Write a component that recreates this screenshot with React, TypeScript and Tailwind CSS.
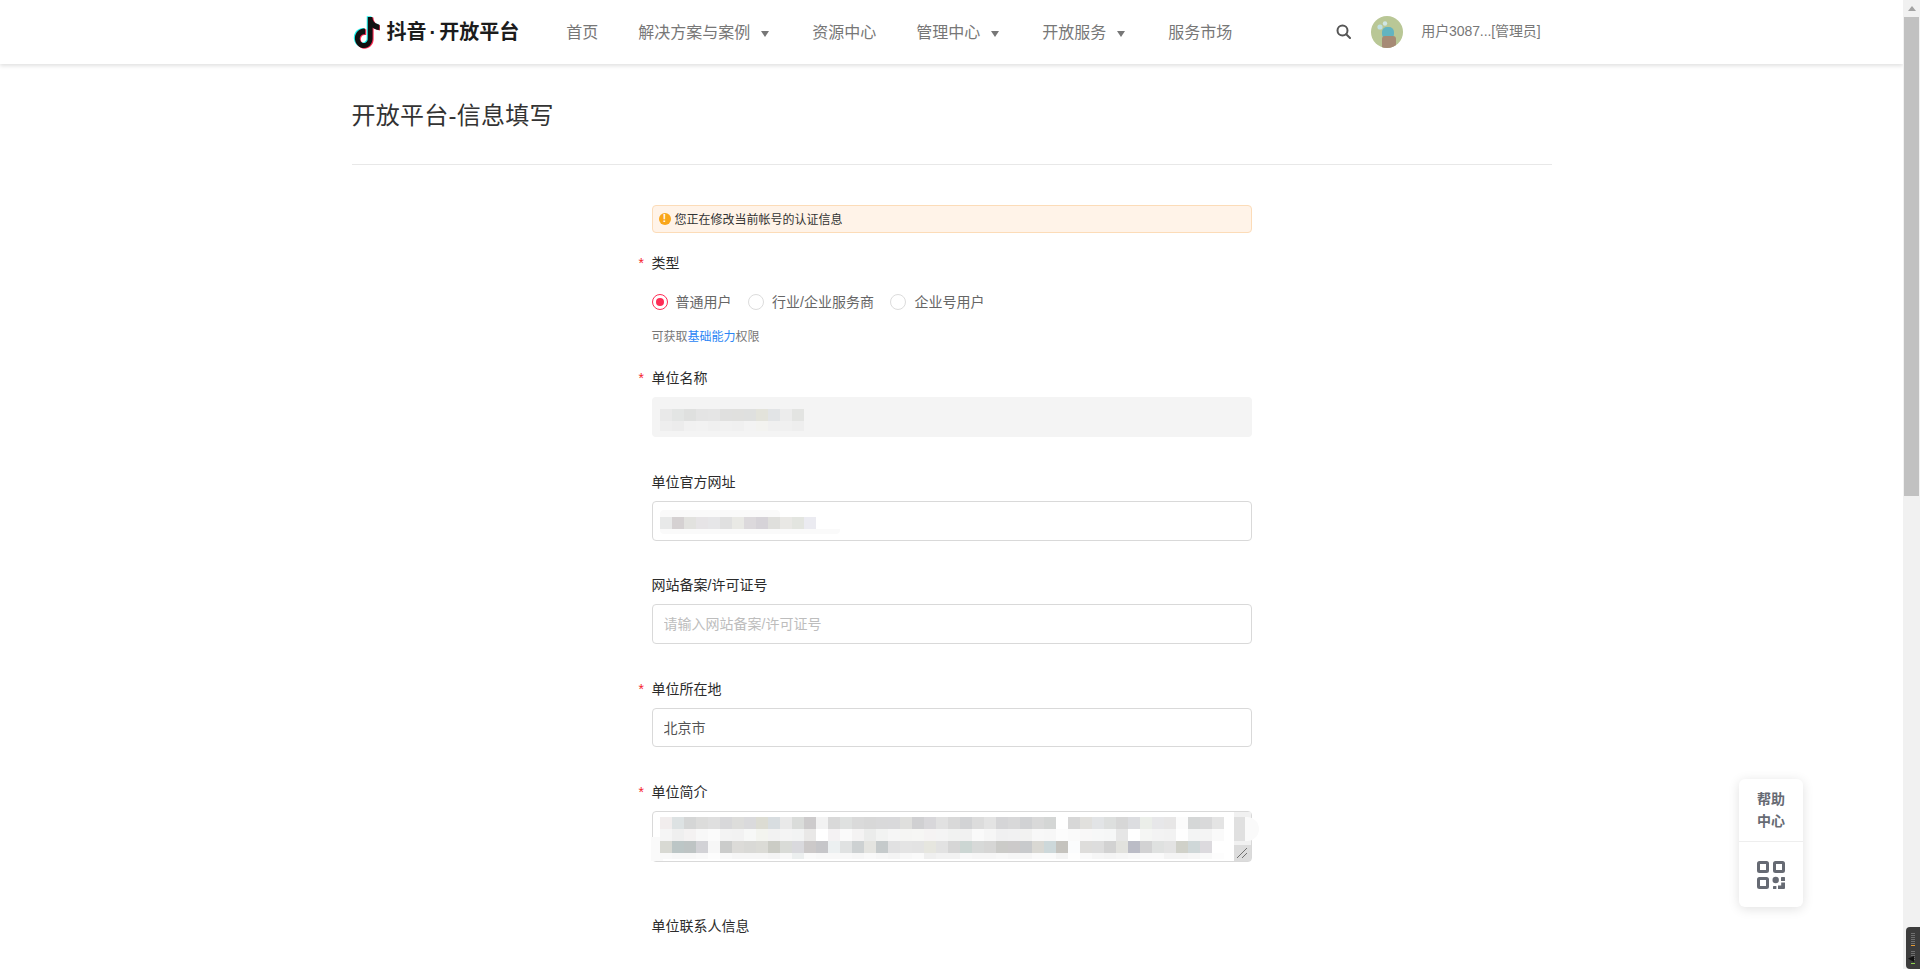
const row1 = "f1eded dde2e3 d5d6d6 dcdcdb dfdfdf d8d8da dddddb dadadc dcdcd3 d8dde0 e9e9e9 dadcda cdcbcc f2f2f2 d9d9d9 dfe1e0 dadada d8d8d8 d9d9da d9d9db dfdfdd d0d0d2 d8d7da e1e1e1 d9d9d9 d2d3d5 dcdcdc e3e3e3 d5d5d7 d8d8d9 d1d2d4 d9d9d9 d4d6d5 ffffff d7d7d7 e1e0dd e2e4e6 dddfde d7d7d7 dcdde0 ebeee9 e7e7e9 e7e6e6 fbfbfb d5d7d7 d9d9da e4e4e4";
const row2 = "f5f5f5 efefef f4f2f2 f8f8f8 fbfbfb f3f3f3 f2f2f2 f7f8f7 f3f4ef f2f2f2 f4f4f4 f2f3f3 e9e8e7 ffffff f4f2f3 fafafa f4f3f3 ebeceb f2f3f2 f6f6f6 f5f5f3 f6f6f4 f5f3f3 f4f4f4 f1f2f1 f1f1f1 fafafa f6f6f6 f0f0f1 f1f1f2 f2f2f1 f8f8f8 f7f7f7 fcfcfc fafafa f9f8f8 f7f8f8 f6f7f7 e6e6e6 ffffff f5f6f4 f3f3f3 f2f2f2 fefefe f3f4f4 f4f4f4 fafafa";
const row3 = "d8d9d3 bcc6c6 bec4c4 d2d2d6 f7f7f7 cbcccb dcdbd8 d9d9d6 dbdbd6 cbccc5 d9dbd7 d9d9dd ccc9c9 c6c6c9 ecf0f1 e0e2e2 cdd1d2 e4e4e0 c5cacb e1e1e2 e4e4e4 e3e3e3 e6e6df e2e2e2 d6d6d6 ccd6d3 d7d9d8 d6d6d5 cbcbc8 cccaca c8cacc d9d8d3 cdd8da c5c3be fbfcfd dedddb dddddd d2d2d2 e2e2de bbbcc6 d2d2d3 dfe1e0 e3e3e3 d0d1c9 cfd7d8 dcdade ffffff";
const row4 = "f9f9f9 f7f7f7 f7f7f7 f9f9f9 fdfdfd f9f9f9 f6f6f6 f6f6f6 f6f6f6 f4f4f4 f8f8f8 ecefef fafafa f8f8f8 f8f8f8 f8f8f8 f6f6f6 f9f9f9 f6f6f6 f4f4f4 f8f8f8 fafafa efefef f2f2f2 f2f2f2 f8f8f8 f6f6f6 f6f6f6 f8f8f8 f6f6f6 f6f6f6 fafafa fafafa f4f4f4 fefefe fafafa f6f6f6 f4f4f4 f6f6f6 f8f8f8 fafafa fafafa f4f4f4 f4f4f4 f6f6f6 f9f9f9 fdfdfd";
const nameA = "e9e9e9 e3e5e4 dfe0df e4e4e4 e5e5e5 e0e0df e0e0de dfe0df e3e3db e2e4e6 ececec e3e4e2";
const nameB = "eeeeee ececec f1f1f1 f2f2f2 f0f0f0 f1f1f1 f0f0f0 f3f3f3 f3f3f0 f0f0f0 f0f0f0 eeeeee";
const site = "e8e9e9 d5d1d2 e2e2df e6e4e6 e6e6e8 e0e0e0 e9e9e5 dcd9dc d6d3d8 dfdfdc e9e8e5 e3e5e0 ebebf1";

function Cells({ colors, height }: { colors: string; height: number }) {
  return (
    <div className="flex">
      {colors.split(" ").map((c, i) => (
        <div key={i} className="w-3 shrink-0" style={{ height, background: `#${c}` }} />
      ))}
    </div>
  );
}

function Logo() {
  const d =
    "M12.525.02c1.31-.02 2.61-.01 3.91-.02.08 1.53.63 3.09 1.75 4.17 1.12 1.11 2.7 1.62 4.24 1.79v4.03c-1.44-.05-2.89-.35-4.2-.97-.57-.26-1.1-.59-1.62-.93-.01 2.92.01 5.84-.02 8.75-.08 1.4-.54 2.79-1.35 3.94-1.31 1.92-3.58 3.17-5.91 3.21-1.43.08-2.86-.31-4.08-1.03-2.02-1.19-3.44-3.37-3.65-5.71-.02-.5-.03-1-.01-1.49.18-1.9 1.12-3.72 2.58-4.96 1.66-1.44 3.98-2.13 6.15-1.72.02 1.48-.04 2.96-.04 4.44-.99-.32-2.15-.23-3.02.37-.63.41-1.11 1.04-1.36 1.75-.21.51-.15 1.07-.14 1.61.24 1.64 1.82 3.02 3.5 2.87 1.12-.01 2.19-.66 2.77-1.61.19-.33.4-.67.41-1.06.1-1.79.06-3.57.07-5.36.01-4.03-.01-8.05.02-12.07z";
  return (
    <svg width="28" height="33" viewBox="-0.9 -0.7 23.8 25.4" preserveAspectRatio="none" className="shrink-0">
      <path d={d} fill="#25f4ee" transform="translate(-.9 -.5)" />
      <path d={d} fill="#fe2c55" transform="translate(.9 .5)" />
      <path d={d} fill="#111" />
    </svg>
  );
}

function Avatar() {
  return (
    <svg width="32" height="32" viewBox="0 0 32 32" className="shrink-0">
      <defs>
        <clipPath id="avatar-clip">
          <circle cx="16" cy="16" r="16" />
        </clipPath>
      </defs>
      <g clipPath="url(#avatar-clip)">
        <rect width="32" height="32" fill="#b9c796" />
        <rect x="11" y="11" width="12" height="12" rx="5" fill="#62b4c1" />
        <rect x="11" y="20" width="14" height="14" rx="3" fill="#a68a75" />
        <circle cx="9" cy="11" r="2.6" fill="#bfe0e4" />
        <circle cx="14" cy="7.5" r="2.2" fill="#cfe6e6" />
      </g>
    </svg>
  );
}

function QrIcon() {
  return (
    <svg width="28" height="28" viewBox="0 0 28 28" fill="#666a73">
      <g fill="none" stroke="#666a73" strokeWidth="3">
        <rect x="1.5" y="1.5" width="9" height="9" rx="1" />
        <rect x="17.5" y="1.5" width="9" height="9" rx="1" />
        <rect x="1.5" y="17.5" width="9" height="9" rx="1" />
      </g>
      <circle cx="18.7" cy="19" r="3.2" />
      <rect x="24" y="16" width="4" height="4" rx=".6" />
      <path d="M24.2 21.5H28V27a1 1 0 0 1-1 1h-6v-3.4h3.2z" />
      <rect x="16" y="25" width="3.4" height="3" rx=".6" />
    </svg>
  );
}

function NavItem({ label, caret }: { label: string; caret?: boolean }) {
  return (
    <div className="flex items-center">
      <span>{label}</span>
      {caret && (
        <span className="ml-[11px] mr-[3px] mt-0.5 w-0 h-0 border-x-4 border-x-transparent border-t-[6px] border-t-[#777]" />
      )}
    </div>
  );
}

function Label({ text, required }: { text: string; required?: boolean }) {
  return (
    <div className="flex items-center h-[22px] text-sm text-[#2b2b2b]">
      {required && <span className="-ml-[13px] w-[13px] text-[#f5222d] text-sm leading-none">*</span>}
      {text}
    </div>
  );
}

function Radio({ label, checked }: { label: string; checked?: boolean }) {
  return (
    <div className="flex items-center gap-2 h-[22px]">
      <span
        className={
          checked
            ? "flex items-center justify-center w-4 h-4 rounded-full border border-[#fe2c55]"
            : "flex items-center justify-center w-4 h-4 rounded-full border border-[#dcdcdc]"
        }
      >
        {checked && <span className="w-2 h-2 rounded-full bg-[#fe2c55]" />}
      </span>
      <span className="text-sm text-[#666]">{label}</span>
    </div>
  );
}

function Field({
  label,
  required,
  value,
  placeholder,
  children,
}: {
  label: string;
  required?: boolean;
  value?: string;
  placeholder?: string;
  children?: React.ReactNode;
}) {
  return (
    <div className="mb-[33.75px]">
      <Label text={label} required={required} />
      <div className="relative mt-2 h-[39.5px]">
        <input
          readOnly
          value={value ?? ""}
          placeholder={placeholder}
          className="w-full h-full px-[11px] rounded-sm border border-[#d9d9d9] bg-white text-sm text-[#555] placeholder:text-[#bdbdbd] outline-none"
        />
        {children}
      </div>
    </div>
  );
}

export default function App() {
  return (
    <div className="flex h-screen w-full overflow-hidden bg-white font-['Liberation_Sans','Noto_Sans_CJK_SC',sans-serif]">
      <div className="relative flex-1 min-w-0">
        <header className="h-16 bg-white shadow-[0_2px_4px_rgba(0,0,0,0.12)]">
          <div className="flex items-center h-full w-[1200px] mx-auto">
            <div className="flex items-center gap-[7px]">
              <Logo />
              <span className="flex items-center text-[20px] font-bold text-[#1c1c1c] whitespace-nowrap">
                抖音<span className="mx-[3px]">·</span>开放平台
              </span>
            </div>
            <nav className="flex items-center gap-10 ml-[47px] mt-px text-base text-[#777]">
              <NavItem label="首页" />
              <NavItem label="解决方案与案例" caret />
              <NavItem label="资源中心" />
              <NavItem label="管理中心" caret />
              <NavItem label="开放服务" caret />
              <NavItem label="服务市场" />
            </nav>
            <div className="flex items-center ml-auto pr-[11px]">
              <svg width="15" height="15" viewBox="0 0 15 15" fill="none" stroke="#555" strokeWidth="2" className="-mt-0.5">
                <circle cx="6.5" cy="6.5" r="5" />
                <path d="M10.2 10.2 14 14" strokeLinecap="round" />
              </svg>
              <div className="ml-5 mr-[18px]">
                <Avatar />
              </div>
              <span className="text-sm text-[#777] tracking-[-0.1px] whitespace-nowrap -mt-0.5">用户3087...[管理员]</span>
            </div>
          </div>
        </header>

        <main className="w-[1200px] mx-auto">
          <h1 className="h-[101px] flex items-center pt-[3px] text-2xl tracking-[0.25px] font-normal text-[#333] border-b border-[#e8e8e8]">开放平台-信息填写</h1>

          <div className="w-[600px] ml-[300px] mt-10">
            <div className="flex items-center gap-1 h-[28px] px-[6px] rounded border border-[#fcdcb8] bg-[#fff3e8] text-xs text-[#333]">
              <span className="flex items-center justify-center w-3 h-3 rounded-full bg-[#f9a61a] text-white text-[10px] font-bold leading-none">!</span>
              <span className="mt-px">您正在修改当前帐号的认证信息</span>
            </div>

            <div className="mt-[19px]">
              <Label text="类型" required />
            </div>
            <div className="flex items-center gap-[16.5px] mt-[17px]">
              <Radio label="普通用户" checked />
              <Radio label="行业/企业服务商" />
              <Radio label="企业号用户" />
            </div>
            <p className="mt-[14px] h-5 leading-5 text-xs text-[#777]">
              可获取<span className="text-[#2a85f5]">基础能力</span>权限
            </p>

            <div className="mt-5">
              <div className="mb-[34px]">
                <Label text="单位名称" required />
                <div className="relative mt-2 h-10 rounded-sm bg-[#f4f4f4]">
                  <div className="absolute left-2 top-3 flex flex-col">
                    <Cells colors={nameA} height={12} />
                    <Cells colors={nameB} height={10} />
                  </div>
                </div>
              </div>

              <Field label="单位官方网址">
                <div className="absolute left-2 top-[9px] w-[120px] h-[7px] rounded-t bg-[#fafafa]" />
                <div className="absolute left-2 top-4">
                  <Cells colors={site} height={12} />
                </div>
                <div className="absolute left-2 top-7 w-[180px] h-[5px] rounded-b bg-[#fafafa]" />
              </Field>

              <Field label="网站备案/许可证号" placeholder="请输入网站备案/许可证号" />
              <Field label="单位所在地" required value="北京市" />

              <Label text="单位简介" required />
              <div className="relative mt-2 h-[51.5px] rounded-sm border border-[#d9d9d9] bg-white">
                <div className="absolute -left-[2px] top-[25px] w-[12px] h-[24px] bg-[#fafafa]" />
                <div className="absolute left-[7px] top-[5px] flex flex-col">
                  <Cells colors={row1} height={12} />
                  <Cells colors={row2} height={12} />
                  <Cells colors={row3} height={12} />
                  <Cells colors={row4} height={6} />
                </div>
                <div className="absolute right-0 top-0 w-[17px] h-[35px] bg-[#f1f1f1]" />
                <div className="absolute right-[5px] top-[5px] w-3 h-6 bg-[#e0e0e0]" />
                <div className="absolute -right-[8px] top-[5px] w-[14px] h-[24px] rounded-r-xl bg-[#fafafa]" />
                <div className="absolute right-0 bottom-0 flex items-center justify-center w-[17px] h-[16px] bg-[#dcdcdc]">
                  <svg width="12" height="12" viewBox="0 0 12 12" fill="none" stroke="#555" strokeWidth="0.8">
                    <path d="M1 11 11 1M6 11l5-5" />
                  </svg>
                </div>
              </div>

              <div className="mt-[53px]">
                <Label text="单位联系人信息" />
              </div>
            </div>
          </div>
        </main>

        <div className="absolute right-[100px] bottom-[62px] w-16 h-32 rounded-md bg-white shadow-[0_2px_12px_rgba(0,0,0,0.12)] flex flex-col">
          <div className="flex items-center justify-center h-[63px] border-b border-[#eee] text-sm leading-[22px] font-bold text-[#666a73] text-center">
            帮助
            <br />
            中心
          </div>
          <div className="flex flex-1 items-center justify-center">
            <QrIcon />
          </div>
        </div>
      </div>

      <aside className="relative flex flex-col w-[17px] shrink-0 bg-[#f1f1f1]">
        <div className="flex items-center justify-center h-[17px]">
          <span className="w-0 h-0 border-x-4 border-x-transparent border-b-[5px] border-b-[#a3a3a3]" />
        </div>
        <div className="mx-px h-[479px] bg-[#c1c1c1]" />
        <div className="absolute right-0 bottom-0 w-[14px] h-[42px] rounded-l-sm bg-[#3c3c3c]">
          <svg width="14" height="42" viewBox="0 0 14 42">
            <path
              d="M5 6.5h4M5 8.5h4M5 10.5h4M5 12.5h4M5 14.5h4M5 16.5h4M5 24.5h4M5 26.5h4M5 28.5h4M5 30.5h4M5 32.5h4"
              stroke="#6f6f6f"
              strokeWidth="1"
            />
            <path d="M5 18.5h4" stroke="#e39a35" strokeWidth="1" />
            <path d="M5 36.5h4" stroke="#8fd14f" strokeWidth="1" />
            <path d="M2 31.5 8 29v6z" fill="#111" />
          </svg>
        </div>
      </aside>
    </div>
  );
}
